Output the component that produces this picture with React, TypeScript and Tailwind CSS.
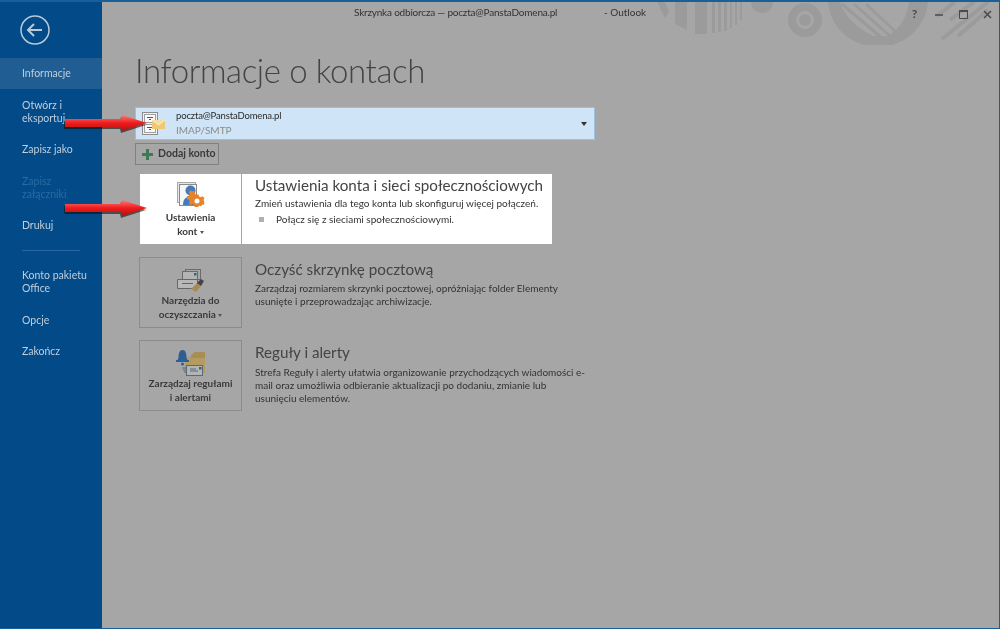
const fontStack = { fontFamily: 'Lato, "Open Sans", "Liberation Sans", sans-serif' };

const navTop = [
  { label: ["Informacje"], active: true },
  { label: ["Otwórz i", "eksportuj"] },
  { label: ["Zapisz jako"] },
  { label: ["Zapisz", "załączniki"], disabled: true },
  { label: ["Drukuj"] },
];

const navBottom = [
  { label: ["Konto pakietu", "Office"] },
  { label: ["Opcje"] },
  { label: ["Zakończ"] },
];

function NavItem({ label, active, disabled }: { label: string[]; active?: boolean; disabled?: boolean }) {
  return (
    <div
      className={`flex flex-col justify-center pl-[22px] text-[10.5px] leading-[13px] ${label.length > 1 ? "h-[45px]" : "h-[31px]"} ${
        active ? "bg-[#1f5d93]" : ""
      } ${disabled ? "text-[#2a6ba3]" : "text-[#c0cfdc]"}`}
    >
      {label.map((l) => (
        <span key={l}>{l}</span>
      ))}
    </div>
  );
}

function Arrow() {
  return (
    <svg width="84" height="20" viewBox="0 0 84 20">
      <defs>
        <linearGradient id="arrowFill" x1="0" y1="0" x2="0" y2="1">
          <stop offset="0" stopColor="#ff7a7a" />
          <stop offset="0.5" stopColor="#f01c1c" />
          <stop offset="1" stopColor="#b01010" />
        </linearGradient>
      </defs>
      <path d="M1 7h56l1-4 25 8-25 8-1-4H1z" fill="#111" opacity="0.6" transform="translate(-1 1)" />
      <path d="M1 6h56l1-4 25 8-25 8-1-4H1z" fill="url(#arrowFill)" />
    </svg>
  );
}

function AccountIcon() {
  return (
    <svg width="26" height="26" viewBox="0 0 26 26">
      <rect x="1.500" y="1.500" width="15" height="22" fill="#f2f2f2" stroke="#8c8c8c" />
      <rect x="3.500" y="3.500" width="11" height="8" fill="#fafafa" stroke="#a0a0a0" />
      <rect x="3.500" y="13.500" width="11" height="8" fill="#fafafa" stroke="#a0a0a0" />
      <path d="M6 6.500h6M8 8.500h2M6 16.500h6M8 18.500h2" stroke="#555" />
      <rect x="11" y="9" width="13" height="9" fill="#ecc878" />
      <path d="M11 9l6.500 5 6.500-5" fill="#f5dfa0" stroke="#f9eecc" />
    </svg>
  );
}

function SettingsIcon() {
  return (
    <svg className="mb-[2px]" width="28" height="26" viewBox="0 0 28 26">
      <rect x="0.500" y="0.500" width="18" height="20" fill="#e6e6e6" stroke="#a8a8a8" />
      <rect x="2.500" y="2.500" width="17" height="21" fill="#f6f6f6" stroke="#8a8a8a" />
      <circle cx="13.500" cy="8.500" r="5" fill="#3f7cbc" />
      <path d="M6 23c0-5 2-8 6-8 3 0 4 1 5 2v6z" fill="#3f7cbc" />
      <path
        d="M18.500 12.500h3l.5 2 1.800.8 1.700-1 2 2-1 1.700.8 1.800-.1 0v3l-2-.2-.8 1.800-1.700-1-2 1.600h-3l-.5-2-1.800-.8-1.700 1-2-2 1-1.700-.8-1.800-2-.5v-3l2-.5.8-1.800-1-1.700 2-2 1.700 1 1.800-.8z"
        fill="#e8822a"
      />
      <circle cx="20" cy="19" r="2.500" fill="#fff" />
    </svg>
  );
}

function CleanupIcon() {
  return (
    <svg width="28" height="24" viewBox="0 0 28 24">
      <rect x="8.500" y="0.500" width="15" height="10" fill="#a8a8a8" stroke="#6a6a6a" />
      <rect x="5.500" y="2.500" width="15" height="10" fill="#b4b4b4" stroke="#6a6a6a" />
      <rect x="17" y="4" width="2.500" height="2.500" fill="#33608c" />
      <path d="M0.500 10.500h20v9h-20z" fill="#b8b8b8" stroke="#666" />
      <path d="M5 14.500h11" stroke="#666" />
      <path d="M14 20l6-6 4 3-5 6z" fill="#a88a58" />
      <path d="M20 14l4-4 3 2-3 5z" fill="#444" />
    </svg>
  );
}

function RulesIcon() {
  return (
    <svg width="30" height="27" viewBox="0 0 30 27">
      <path d="M9 8h20v16H9z" fill="#b59b5f" />
      <path d="M15 6l4-3h10v6H15z" fill="#a88e54" />
      <path d="M2.500 9c0-5 1-8 4-8s4 3 4 8l1 2H1.500z" fill="#2f5f92" />
      <rect x="0" y="11" width="13" height="2" fill="#2f5f92" />
      <circle cx="6.500" cy="15" r="1.500" fill="#2f5f92" />
      <path d="M6 19h4M7 21h3M8 23h2" stroke="#5a6a78" />
      <rect x="10.500" y="16.500" width="16" height="10" fill="#b4b4b4" stroke="#5a6a78" />
      <path d="M14 20h6M14 22h8" stroke="#5a6a78" />
      <rect x="23" y="18" width="2.500" height="2.500" fill="#33608c" />
    </svg>
  );
}

function Caret() {
  return <span className="inline-block border-x-[2.500px] border-t-[3px] border-x-transparent border-t-[#555] align-middle" />;
}

function ActionButton({ children, icon, white }: { children: React.ReactNode; icon: React.ReactNode; white?: boolean }) {
  return (
    <div
      className={`flex shrink-0 flex-col items-center text-center text-[10px] font-bold leading-[14px] text-[#3a3a3a] ${
        white ? "h-[70px] w-[101px] bg-white pt-[12px]" : "h-[71px] w-[103px] border border-[#8b8b8b] pt-[11px]"
      }`}
    >
      <div className="flex h-[24px] items-end justify-center">{icon}</div>
      <div>{children}</div>
    </div>
  );
}

export default function App() {
  return (
    <div
      className="relative flex h-[629px] w-[1000px] overflow-hidden border-t-2 border-r border-b border-t-[#17609c] border-r-[#17609c] border-b-[#17609c] bg-[#a6a6a6] blur-[0.35px]"
      style={fontStack}
    >
      {/* background pattern in the title bar */}
      <svg className="absolute left-[640px] top-0" width="360" height="50" viewBox="0 0 360 50">
        <g fill="#9b9b9b">
          <path d="M17 0h8l4 10-4 6zM35 0h12v28l-12-6zM55 0h12v32H55zM72 0h3v31h-3zM78 0h3v30h-3zM84 0h3v29h-3zM90 0h2v26h-2zM95 0h2v23h-2zM100 0h2v18h-2z" />
          <path d="M111 0h22a11 11 0 0 1-22 0z" />
          <path fillRule="evenodd" d="M148 18a17 17 0 1 0 34 0 17 17 0 1 0-34 0zM156 18a9 9 0 1 1 18 0 9 9 0 1 1-18 0z" />
          <circle cx="165" cy="18" r="6" />
          <path d="M188 0h100c-2 20-14 36-36 43h-28c-22-7-34-23-36-43z" />
        </g>
        <path d="M200 0h69c-2 16-10 28-22 34h-14c-16-8-29-20-33-34z" fill="#a6a6a6" />
        <path d="M202 2l42 36M214 2l36 32M226 2l30 28" stroke="#9b9b9b" strokeWidth="3" />
        <path d="M297 14l18-14M310 18l24-18M302 37l46-37M318 34l30-26" stroke="#9b9b9b" strokeWidth="4" />
      </svg>

      <aside className="flex w-[102px] shrink-0 flex-col bg-[#024a88]">
        <div className="flex h-[56px] items-center pl-[20px]">
          <svg width="30" height="30" viewBox="0 0 30 30" fill="none" stroke="#b9c9d8">
            <circle cx="15" cy="15" r="14" strokeWidth="1.500" />
            <path d="M8 15h14M14 9l-6 6 6 6" strokeWidth="2" />
          </svg>
        </div>
        {navTop.map((n) => (
          <NavItem key={n.label[0]} {...n} />
        ))}
        <div className="mx-[22px] mt-[9px] mb-[8px] h-px bg-[#2a66a0]" />
        <div className="[&>*:first-child]:mb-px">
          {navBottom.map((n) => (
            <NavItem key={n.label[0]} {...n} />
          ))}
        </div>
      </aside>

      <main className="relative flex-1 text-[#333]">
        <div className="absolute left-0 right-0 top-[3px] flex items-center text-[10px] text-[#333]">
          <span className="ml-[252px] tracking-[-0.2px]">Skrzynka odbiorcza — poczta@PanstaDomena.pl</span>
          <span className="absolute left-[502px]">- Outlook</span>
        </div>
        <div className="absolute right-0 top-[3px] flex items-center text-[#4a4a4a]">
          <span className="w-[25px] text-center text-[12px] font-bold">?</span>
          <span className="flex w-[24px] justify-center">
            <svg width="8" height="8" viewBox="0 0 8 8"><path d="M0 5h8" stroke="#4a4a4a" strokeWidth="1.500" /></svg>
          </span>
          <span className="flex w-[24px] justify-center">
            <svg width="9" height="9" viewBox="0 0 9 9" fill="none"><path d="M.5 1.500h8v7h-8z" stroke="#4a4a4a" /><path d="M0 1h9" stroke="#4a4a4a" strokeWidth="2" /></svg>
          </span>
          <span className="flex w-[24px] justify-center">
            <svg width="9" height="9" viewBox="0 0 9 9"><path d="M1 1l7 7M8 1l-7 7" stroke="#4a4a4a" strokeWidth="1.500" /></svg>
          </span>
        </div>

        <div className="flex flex-col pl-[33px] pt-[46px]">
          <h1 className="h-[59px] text-[33px] font-light leading-[44px] tracking-[-0.4px] text-[#444]">Informacje o kontach</h1>

          <div className="relative flex h-[33px] w-[460px] items-center border border-[#9bbfdd] bg-[#cfe4f6] pl-[5px]">
            <AccountIcon />
            <div className="ml-[9px] pb-[2px] text-[9.500px] leading-[15px]">
              <div className="tracking-[-0.15px] text-[#2b2b2b]">poczta@PanstaDomena.pl</div>
              <div className="text-[10px] text-[#8a8a8a]">IMAP/SMTP</div>
            </div>
            <span className="absolute right-[7px] top-[14px] border-x-[3.500px] border-t-[4px] border-x-transparent border-t-[#333]" />
          </div>

          <div className="mt-[3px] flex h-[22px] w-[84px] items-center gap-[5px] border border-[#808080] pl-[6px] text-[10.5px] font-bold text-[#3a3a3a]">
            <svg width="11" height="11" viewBox="0 0 11 11"><path d="M4 0h3v4h4v3H7v4H4V7H0V4h4z" fill="#3f7a55" /></svg>
            Dodaj konto
          </div>

          <div className="mt-[9px] ml-[5px] flex">
            <ActionButton white icon={<SettingsIcon />}>
              Ustawienia
              <br />
              kont <Caret />
            </ActionButton>
            <div className="ml-px h-[70px] w-[310px] bg-white pl-[13px] pt-[2px]">
              <h2 className="whitespace-nowrap text-[15.200px] leading-[19px] text-[#444]">Ustawienia konta i sieci społecznościowych</h2>
              <p className="mt-[1px] text-[10px] leading-[15px] text-[#333]">Zmień ustawienia dla tego konta lub skonfiguruj więcej połączeń.</p>
              <div className="mt-[1px] flex items-center text-[10px] leading-[15px] text-[#333]">
                <span className="ml-[4px] mr-[12px] h-[5px] w-[5px] bg-[#b0b0b0]" />
                Połącz się z sieciami społecznościowymi.
              </div>
            </div>
          </div>

          <div className="mt-[13px] ml-[4px] flex">
            <ActionButton icon={<CleanupIcon />}>
              Narzędzia do
              <br />
              oczyszczania <Caret />
            </ActionButton>
            <div className="ml-[13px] pt-[3px]">
              <h2 className="text-[15.200px] leading-[19px] text-[#444]">Oczyść skrzynkę pocztową</h2>
              <p className="mt-[3px] text-[10px] leading-[13px] text-[#333]">
                Zarządzaj rozmiarem skrzynki pocztowej, opróżniając folder Elementy
                <br />
                usunięte i przeprowadzając archiwizacje.
              </p>
            </div>
          </div>

          <div className="mt-[12px] ml-[4px] flex">
            <ActionButton icon={<RulesIcon />}>
              Zarządzaj regułami
              <br />i alertami
            </ActionButton>
            <div className="ml-[13px] pt-[3px]">
              <h2 className="text-[15.200px] leading-[19px] text-[#444]">Reguły i alerty</h2>
              <p className="mt-[4px] text-[10px] leading-[13px] text-[#333]">
                Strefa Reguły i alerty ułatwia organizowanie przychodzących wiadomości e-
                <br />
                mail oraz umożliwia odbieranie aktualizacji po dodaniu, zmianie lub
                <br />
                usunięciu elementów.
              </p>
            </div>
          </div>
        </div>
      </main>

      {/* annotation arrows over the screenshot */}
      <div className="absolute left-[64px] top-[111px]"><Arrow /></div>
      <div className="absolute left-[64px] top-[196px]"><Arrow /></div>
    </div>
  );
}
